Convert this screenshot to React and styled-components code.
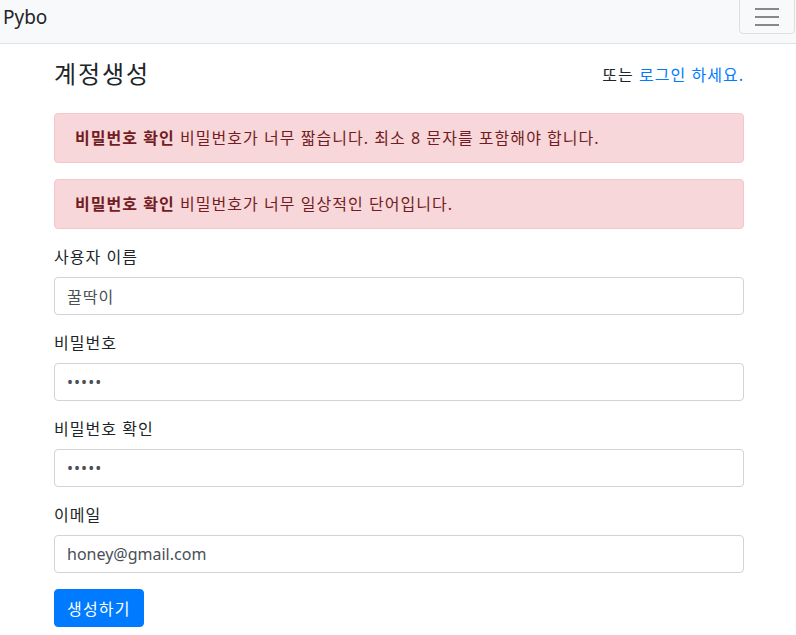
import React from 'react';
import styled, { createGlobalStyle } from 'styled-components';

const GlobalStyle = createGlobalStyle`
    * {
        box-sizing: border-box;
    }
    body {
        margin: 0;
        background: #fff;
        color: #212529;
        font-family: "Noto Sans", "Noto Sans CJK KR", sans-serif;
        font-size: 16px;
        line-height: 24px;
        letter-spacing: 0.065em;
    }
`;

const Navbar = styled.nav`
    height: 44px;
    background-color: #f8f9fa;
    border-bottom: 1px solid #dee2e6;
    display: flex;
    justify-content: space-between;
    align-items: flex-start;
    padding: 0 1px 0 3px;
    overflow: hidden;
`;

const Brand = styled.a`
    font-size: 19px;
    line-height: 34px;
    letter-spacing: 0;
    color: #212529;
    text-decoration: none;
`;

const Toggler = styled.button`
    width: 56px;
    height: 40px;
    margin-top: -6px;
    background: transparent;
    border: 1px solid rgba(0, 0, 0, 0.1);
    border-radius: 4px;
    display: flex;
    flex-direction: column;
    justify-content: center;
    align-items: center;
    gap: 6px;
    padding: 6px 0 0;

    span {
        display: block;
        width: 24px;
        height: 2px;
        background: #888;
    }
`;

const Container = styled.div`
    max-width: 720px;
    margin: 0 auto;
    padding: 0 14px 0 16px;
`;

const Header = styled.div`
    display: flex;
    justify-content: space-between;
    align-items: center;
    margin: 16px 0 24px;
    height: 29px;
`;

const Title = styled.h4`
    margin: 0;
    font-size: 24px;
    font-weight: 400;
    line-height: 1.2;
    letter-spacing: 0.08em;
`;

const HeaderLink = styled.div`
    a {
        color: #007bff;
        text-decoration: none;
    }
`;

const Alert = styled.div`
    padding: 12px 20px;
    margin-bottom: 16px;
    background-color: #f8d7da;
    border: 1px solid #f5c6cb;
    border-radius: 4px;
    color: #721c24;

    strong {
        font-weight: 700;
    }
`;

const FormGroup = styled.div`
    margin-bottom: 16px;
`;

const Label = styled.label`
    display: block;
    margin-bottom: 8px;
`;

const Input = styled.input`
    display: block;
    width: 100%;
    height: 38px;
    padding: 6px 12px;
    font-family: inherit;
    font-size: 16px;
    letter-spacing: ${(p) => (p.type === 'email' ? '0' : '0.065em')};
    color: #495057;
    background: #fff;
    border: 1px solid #ced4da;
    border-radius: 4px;
    outline: none;
`;

const Button = styled.button`
    height: 38px;
    padding: 6px 12px;
    font-family: inherit;
    font-size: 16px;
    letter-spacing: 0.075em;
    color: #fff;
    background-color: #007bff;
    border: 1px solid #007bff;
    border-radius: 4px;
    cursor: pointer;
`;

const errors = [
    '비밀번호가 너무 짧습니다. 최소 8 문자를 포함해야 합니다.',
    '비밀번호가 너무 일상적인 단어입니다.',
];

const fields = [
    { label: '사용자 이름', type: 'text', value: '꿀딱이' },
    { label: '비밀번호', type: 'password', value: '12345' },
    { label: '비밀번호 확인', type: 'password', value: '12345' },
    { label: '이메일', type: 'email', value: 'honey@gmail.com' },
];

const App = () => {
    return (
        <>
            <GlobalStyle />
            <Navbar>
                <Brand href="#">Pybo</Brand>
                <Toggler>
                    <span />
                    <span />
                    <span />
                </Toggler>
            </Navbar>
            <Container>
                <Header>
                    <Title>계정생성</Title>
                    <HeaderLink>
                        또는 <a href="#">로그인 하세요.</a>
                    </HeaderLink>
                </Header>
                {errors.map((msg) => (
                    <Alert key={msg}>
                        <strong>비밀번호 확인</strong> {msg}
                    </Alert>
                ))}
                <form onSubmit={(e) => e.preventDefault()}>
                    {fields.map((f) => (
                        <FormGroup key={f.label}>
                            <Label>{f.label}</Label>
                            <Input type={f.type} defaultValue={f.value} />
                        </FormGroup>
                    ))}
                    <Button type="submit">생성하기</Button>
                </form>
            </Container>
        </>
    );
};

export default App;
